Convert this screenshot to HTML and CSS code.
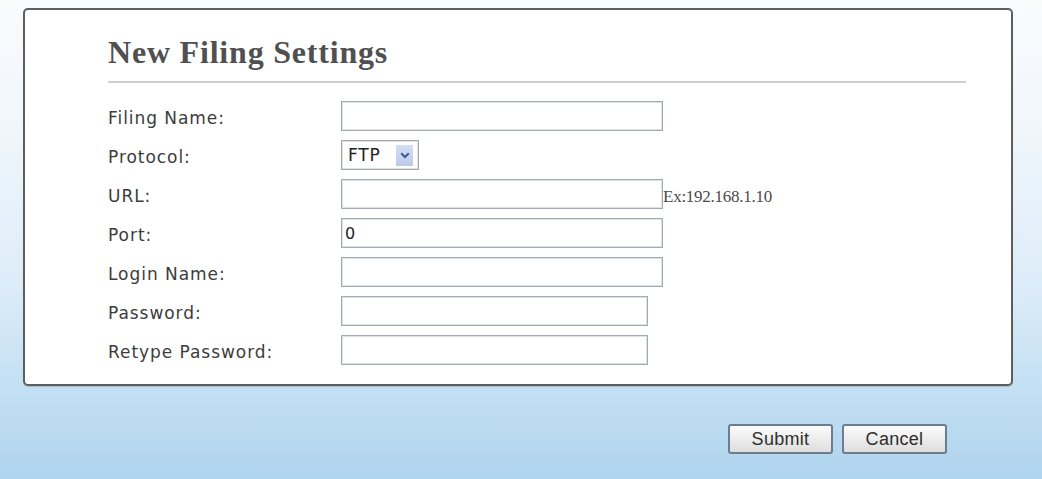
FILE: index.html
```html
<!DOCTYPE html>
<html lang="en">
<head>
<meta charset="utf-8">
<title>New Filing Settings</title>
<link rel="stylesheet" href="styles.css">
</head>
<body>
<div class="page">
  <div class="card">
    <h1 class="title">New Filing Settings</h1>
    <form class="form">
      <label class="label" for="fname">Filing Name:</label>
      <div class="cell"><input id="fname" class="field w-long" type="text"></div>

      <label class="label" for="proto">Protocol:</label>
      <div class="cell">
        <div class="select-wrap">
          <select id="proto" class="select"><option>FTP</option></select>
          <span class="select-arrow">
            <svg width="10" height="7" viewBox="0 0 10 7"><path d="M1.2 1.3 L5 5 L8.8 1.3" fill="none" stroke="#3f5a8c" stroke-width="2"/></svg>
          </span>
        </div>
      </div>

      <label class="label" for="url">URL:</label>
      <div class="cell"><input id="url" class="field w-long" type="text"><span class="hint">Ex:192.168.1.10</span></div>

      <label class="label" for="port">Port:</label>
      <div class="cell"><input id="port" class="field w-long" type="text" value="0"></div>

      <label class="label" for="login">Login Name:</label>
      <div class="cell"><input id="login" class="field w-long" type="text"></div>

      <label class="label" for="pw">Password:</label>
      <div class="cell"><input id="pw" class="field w-short" type="password"></div>

      <label class="label" for="pw2">Retype Password:</label>
      <div class="cell"><input id="pw2" class="field w-short" type="password"></div>
    </form>
  </div>
  <div class="actions">
    <button class="btn" type="button">Submit</button>
    <button class="btn" type="button">Cancel</button>
  </div>
</div>
</body>
</html>
```

FILE: styles.css
```css
html, body {
  margin: 0;
  padding: 0;
}

body {
  width: 1042px;
  height: 479px;
  overflow: hidden;
  background: linear-gradient(to bottom, #f9fbfd 0%, #f1f7fc 25%, #dcecf8 60%, #c2dff3 82%, #afd4ee 100%);
}

.page {
  padding-top: 8px;
}

.card {
  box-sizing: border-box;
  margin-left: 23px;
  width: 990px;
  height: 378px;
  background: #ffffff;
  border: 2px solid #5e5e5e;
  border-radius: 5px;
  padding: 25px 45px 0 83px;
  box-shadow: 0 1px 1px rgba(0, 0, 0, 0.15);
}

.title {
  margin: 0 0 18px 0;
  padding-bottom: 12px;
  border-bottom: 2px solid #cfcfcf;
  font-family: "Liberation Serif", "Times New Roman", serif;
  font-weight: bold;
  font-size: 32px;
  line-height: 34px;
  letter-spacing: 0.8px;
  color: #505050;
}

.form {
  display: grid;
  grid-template-columns: 233px 1fr;
  row-gap: 9px;
  margin: 0;
}

.label {
  align-self: center;
  padding-top: 4px;
  font-family: "DejaVu Sans", Verdana, sans-serif;
  font-size: 17px;
  letter-spacing: 0.95px;
  line-height: 20px;
  color: #3c3c3c;
}

.cell {
  display: flex;
  align-items: flex-end;
  height: 30px;
}

.field {
  box-sizing: border-box;
  height: 30px;
  margin: 0;
  padding: 0 3px;
  border: 1px solid #a4aab1;
  box-shadow: inset 0 0 0 1px #dfe2e5;
  background: #ffffff;
  font-family: "DejaVu Sans", Verdana, sans-serif;
  font-size: 16px;
  color: #222222;
  outline: none;
}

.w-long {
  width: 322px;
}

.w-short {
  width: 307px;
}

.hint {
  font-family: "Liberation Serif", "Times New Roman", serif;
  font-size: 17px;
  letter-spacing: -0.25px;
  line-height: 17px;
  padding-bottom: 4px;
  color: #4a4a4a;
}

.select-wrap {
  position: relative;
  width: 78px;
  height: 30px;
}

.select {
  -webkit-appearance: none;
  appearance: none;
  box-sizing: border-box;
  width: 78px;
  height: 30px;
  margin: 0;
  padding: 0 0 0 6px;
  border: 1px solid #a4aab1;
  box-shadow: inset 0 0 0 1px #dfe2e5;
  border-radius: 0;
  background: #ffffff;
  font-family: "DejaVu Sans", Verdana, sans-serif;
  font-size: 17px;
  letter-spacing: 0.8px;
  color: #222222;
  outline: none;
}

.select-arrow {
  position: absolute;
  right: 6px;
  top: 5px;
  width: 17px;
  height: 21px;
  display: flex;
  align-items: center;
  justify-content: center;
  background: linear-gradient(to bottom, #d3def3, #bccbec);
  pointer-events: none;
}

.actions {
  display: flex;
  justify-content: flex-end;
  gap: 9px;
  padding-right: 95px;
  margin-top: 38px;
}

.btn {
  box-sizing: border-box;
  width: 105px;
  height: 30px;
  margin: 0;
  padding: 0;
  border: 2px solid #6d7d8e;
  border-radius: 3px;
  background: linear-gradient(to bottom, #fcfcfc, #ebebeb 55%, #dedede);
  font-family: "Liberation Sans", Arial, sans-serif;
  font-size: 18px;
  letter-spacing: 0.3px;
  color: #2e2e2e;
}
```
